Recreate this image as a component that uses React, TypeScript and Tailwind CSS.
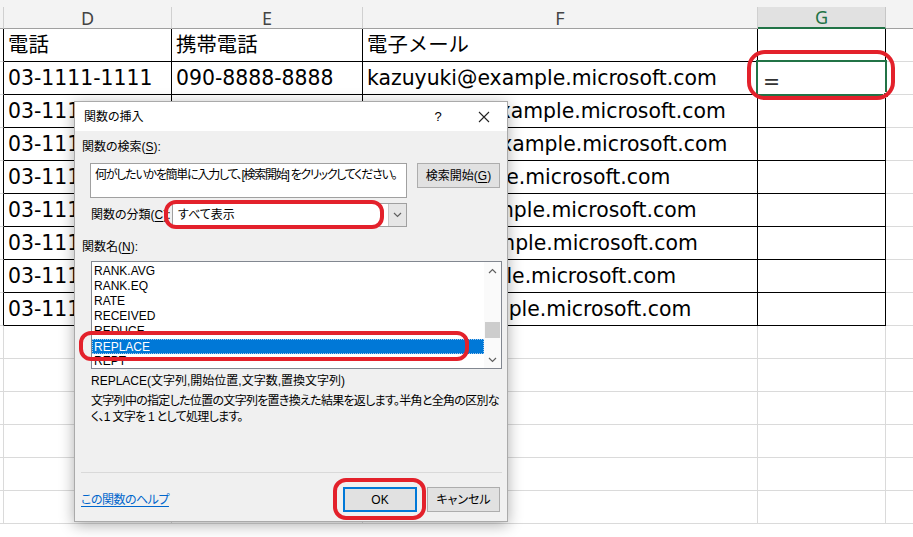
import React from "react";

const rows: string[][] = [
  ["電話", "携帯電話", "電子メール", ""],
  ["03-1111-1111", "090-8888-8888", "kazuyuki@example.microsoft.com", "="],
  ["03-1111-2222", "090-8888-7777", "takahashi@example.microsoft.com", ""],
  ["03-1111-3333", "090-8888-6666", "watanabe@example.microsoft.com", ""],
  ["03-1111-4444", "090-8888-5555", "sato@example.microsoft.com", ""],
  ["03-1111-5555", "090-8888-4444", "tanaka@example.microsoft.com", ""],
  ["03-1111-6666", "090-8888-3333", "kimura@example.microsoft.com", ""],
  ["03-1111-7777", "090-8888-2222", "mika@example.microsoft.com", ""],
  ["03-1111-8888", "090-8888-1111", "suzuki@example.microsoft.com", ""],
];

const listItems = ["RANK.AVG", "RANK.EQ", "RATE", "RECEIVED", "REDUCE", "REPLACE", "REPT"];

function Chevron({ dir }: { dir: "up" | "down" }) {
  return (
    <svg width="9" height="6" viewBox="0 0 9 6" className="block">
      {dir === "up" ? (
        <polyline points="1,5 4.5,1.5 8,5" fill="none" stroke="#606060" strokeWidth="1.2" />
      ) : (
        <polyline points="1,1 4.5,4.5 8,1" fill="none" stroke="#606060" strokeWidth="1.2" />
      )}
    </svg>
  );
}

function Ul({ children }: { children: React.ReactNode }) {
  return <span className="underline underline-offset-2">{children}</span>;
}

export default function App() {
  return (
    <div className="relative w-[913px] h-[537px] overflow-hidden bg-white">
      {/* Spreadsheet */}
      <div className="flex flex-col font-['DejaVu_Sans','Noto_Sans_CJK_JP',sans-serif] text-[20.4px] text-black">
        <div className="h-[7px] bg-[#f3f3f3]" />
        {/* column header */}
        <div className="flex h-[22px] bg-[#f3f3f3] font-['Noto_Sans',sans-serif] text-[18px] text-[#444]">
          <div className="w-[4px] shrink-0 border-r border-b border-r-[#d0d0d0] border-b-[#a0a0a0]" />
          <div className="w-[168px] shrink-0 border-r border-b border-r-[#d0d0d0] border-b-[#a0a0a0] flex items-center justify-center leading-none">D</div>
          <div className="w-[191px] shrink-0 border-r border-b border-r-[#d0d0d0] border-b-[#a0a0a0] flex items-center justify-center leading-none">E</div>
          <div className="w-[395px] shrink-0 border-r border-b border-r-[#d0d0d0] border-b-[#a0a0a0] flex items-center justify-center leading-none">F</div>
          <div className="w-[128px] shrink-0 border-r border-r-[#c6c6c6] border-b-2 border-b-[#217346] bg-[#e1e1e1] text-[#217346] flex items-center justify-center leading-none">G</div>
          <div className="flex-1 border-b border-b-[#a0a0a0]" />
        </div>
        {/* table rows */}
        {rows.map((r, i) => (
          <div key={i} className="flex h-[33px]">
            <div className="w-[4px] shrink-0 border-r border-r-black border-b border-b-[#dadada]" />
            <div className="w-[168px] shrink-0 border-r border-b border-black flex items-center pl-[4px] pt-[1px] whitespace-nowrap overflow-hidden">{r[0]}</div>
            <div className="w-[191px] shrink-0 border-r border-b border-black flex items-center pl-[4px] pt-[1px] whitespace-nowrap overflow-hidden">{r[1]}</div>
            <div className="w-[395px] shrink-0 border-r border-b border-black flex items-center pl-[4px] pt-[1px] whitespace-nowrap overflow-hidden">{r[2]}</div>
            <div className="w-[128px] shrink-0 border-r border-b border-black flex items-center pl-[5px] pt-[9px] whitespace-nowrap overflow-hidden text-[#333]">{r[3]}</div>
            <div className="flex-1 border-b border-b-[#dadada]" />
          </div>
        ))}
        {/* empty rows */}
        {[0, 1, 2, 3, 4, 5].map((i) => (
          <div key={"e" + i} className="flex h-[33px]">
            <div className="w-[4px] shrink-0 border-r border-b border-[#dadada]" />
            <div className="w-[168px] shrink-0 border-r border-b border-[#dadada]" />
            <div className="w-[191px] shrink-0 border-r border-b border-[#dadada]" />
            <div className="w-[395px] shrink-0 border-r border-b border-[#dadada]" />
            <div className="w-[128px] shrink-0 border-r border-b border-[#dadada]" />
            <div className="flex-1 border-b border-[#dadada]" />
          </div>
        ))}
      </div>

      {/* active cell */}
      <div className="absolute left-[756px] top-[60px] w-[131px] h-[36px] border-2 border-[#217346]" />
      <div className="absolute left-[883px] top-[92px] w-[6px] h-[6px] bg-[#217346] border border-white" />

      {/* Dialog */}
      <div className="absolute left-[74px] top-[101px] w-[434px] h-[421px] border border-[#aaaaaa] bg-[#f0f0f0] shadow-[0_3px_14px_rgba(0,0,0,0.32)] flex flex-col font-['Liberation_Sans','Noto_Sans_CJK_JP',sans-serif] [font-feature-settings:'palt'] text-[12px] text-black">
        <div className="h-[29px] bg-white flex items-center shrink-0">
          <div className="pl-[9px] flex-1 leading-[16px]">関数の挿入</div>
          <div className="w-[46px] text-center text-[13px] leading-none">?</div>
          <div className="w-[46px] flex items-center justify-center">
            <svg width="12" height="12" viewBox="0 0 12 12">
              <path d="M1 1 L11 11 M11 1 L1 11" stroke="#222" strokeWidth="1.1" fill="none" />
            </svg>
          </div>
        </div>

        <div className="mt-[8px] ml-[7px] h-[16px] leading-[16px]">
          関数の検索(<Ul>S</Ul>):
        </div>

        <div className="mt-[8px] flex items-start">
          <div className="ml-[15px] w-[317px] h-[35px] bg-white border border-[#a0a0a0] pl-[4px] pt-[3px] leading-[16px] whitespace-nowrap overflow-hidden tracking-[-1.25px]">
            何がしたいかを簡単に入力して、[検索開始] をクリックしてください。
          </div>
          <div className="ml-[10px] w-[83px] h-[25px] bg-[#e1e1e1] border border-[#adadad] flex items-center justify-center leading-none">
            検索開始(<Ul>G</Ul>)
          </div>
        </div>

        <div className="mt-[5px] flex items-center h-[24px]">
          <div className="ml-[16px] w-[81px] whitespace-nowrap leading-[16px]">
            関数の分類(<Ul>C</Ul>):
          </div>
          <div className="w-[235px] h-[24px] bg-white border border-[#a0a0a0] flex">
            <div className="flex-1 pl-[5px] flex items-center leading-none">すべて表示</div>
            <div className="w-[18px] bg-[#e6e6e6] border-l border-[#c8c8c8] flex items-center justify-center">
              <Chevron dir="down" />
            </div>
          </div>
        </div>

        <div className="mt-[12px] ml-[7px] h-[16px] leading-[16px]">
          関数名(<Ul>N</Ul>):
        </div>

        <div className="mt-[6px] ml-[16px] w-[411px] h-[108px] bg-white border border-[#828790] flex overflow-hidden">
          <div className="flex-1 pt-[2px] overflow-hidden">
            {listItems.map((it) => (
              <div
                key={it}
                className={
                  it === "REPLACE"
                    ? "h-[15px] leading-[14px] pl-[1px] bg-[#0078d7] text-white border border-dotted border-[#9cc8ef]"
                    : "h-[15px] leading-[15px] pl-[2px]"
                }
              >
                {it}
              </div>
            ))}
          </div>
          <div className="w-[17px] bg-[#fafafa] flex flex-col items-center">
            <div className="h-[17px] flex items-center justify-center">
              <Chevron dir="up" />
            </div>
            <div className="h-[43px]" />
            <div className="w-[15px] h-[16px] bg-[#cdcdcd]" />
            <div className="flex-1" />
            <div className="h-[17px] flex items-center justify-center">
              <Chevron dir="down" />
            </div>
          </div>
        </div>

        <div className="mt-[4px] ml-[16px] h-[16px] leading-[16px] whitespace-nowrap">
          REPLACE(文字列,開始位置,文字数,置換文字列)
        </div>
        <div className="mt-[4px] ml-[16px] w-[414px] leading-[16px] tracking-[-0.7px]">
          <div className="whitespace-nowrap">文字列中の指定した位置の文字列を置き換えた結果を返します。半角と全角の区別な</div>
          <div className="whitespace-nowrap">く、1 文字を 1 として処理します。</div>
        </div>

        <div className="mt-[47px] ml-[6px] w-[421px] h-px bg-[#d9d9d9]" />

        <div className="mt-[14px] flex items-center h-[25px]">
          <div className="ml-[6px] text-[#0066cc] underline underline-offset-2 leading-none tracking-[-0.5px]">この関数のヘルプ</div>
          <div className="flex-1" />
          <div className="w-[74px] h-[25px] bg-[#e1e1e1] border-2 border-[#0078d7] flex items-center justify-center leading-none">
            OK
          </div>
          <div className="ml-[10px] mr-[7px] w-[73px] h-[25px] bg-[#e1e1e1] border border-[#adadad] flex items-center justify-center leading-none">
            キャンセル
          </div>
        </div>
      </div>

      {/* red annotation rings */}
      <div className="absolute left-[747px] top-[50px] w-[148px] h-[50px] border-[4px] border-[#e3212b] rounded-[18px]" />
      <div className="absolute left-[164px] top-[200px] w-[220px] h-[29px] border-[4px] border-[#e3212b] rounded-[12px]" />
      <div className="absolute left-[79px] top-[331px] w-[390px] h-[30px] border-[4px] border-[#e3212b] rounded-[12px]" />
      <div className="absolute left-[333px] top-[478px] w-[93px] h-[42px] border-[4px] border-[#e3212b] rounded-[13px]" />
    </div>
  );
}
